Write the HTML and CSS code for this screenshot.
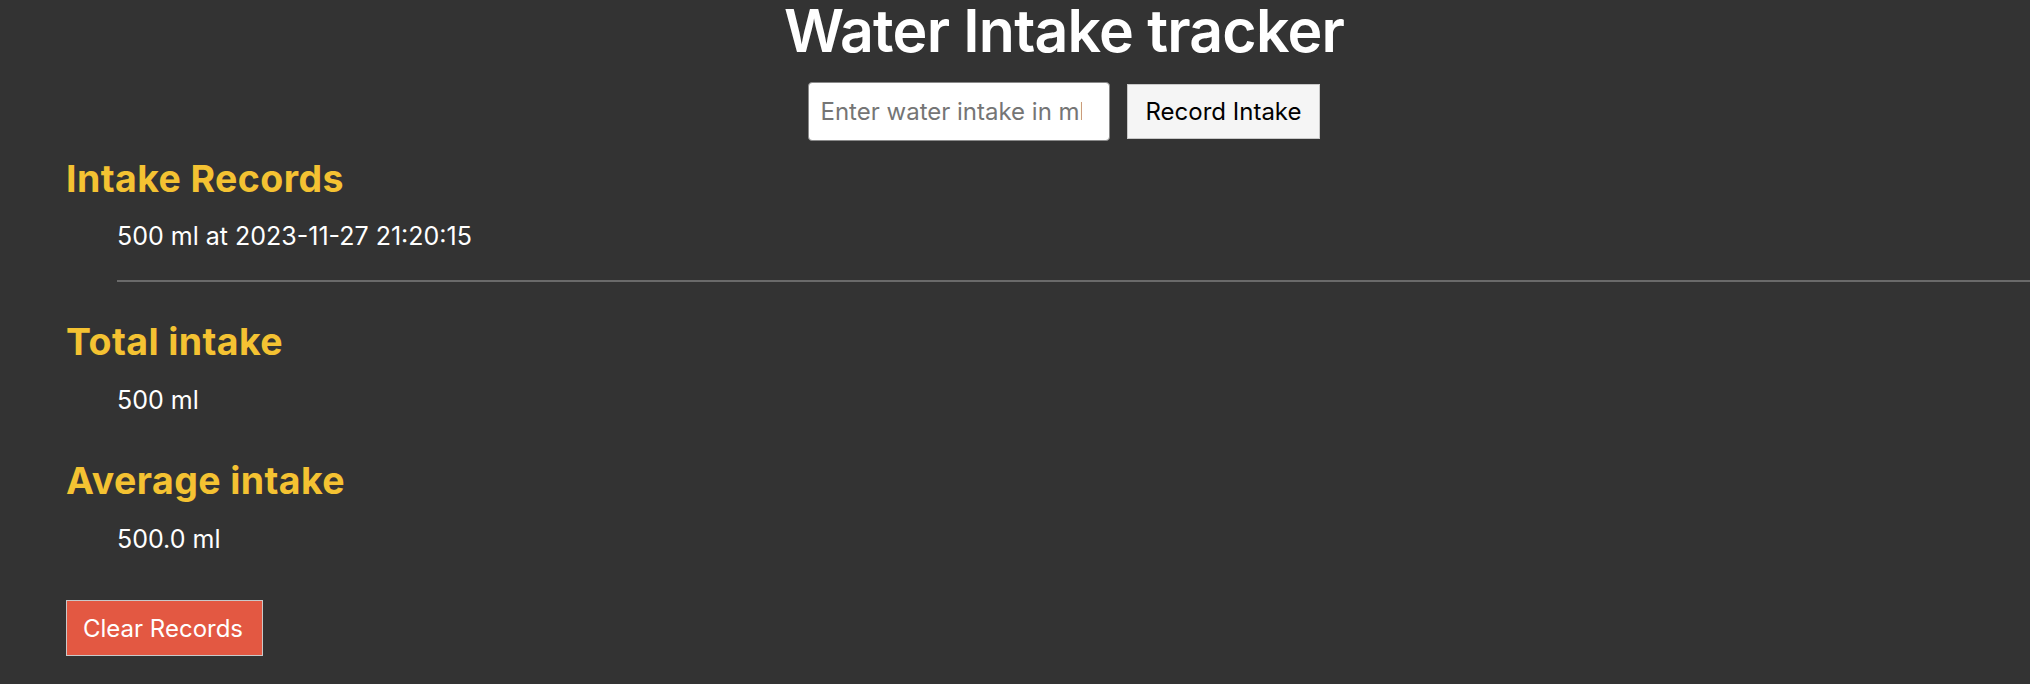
FILE: index.html
```html
<!DOCTYPE html>
<html lang="en">
<head>
<meta charset="utf-8">
<title>Water Intake tracker</title>
<link rel="stylesheet" href="styles.css">
</head>
<body>
  <header class="top">
    <h1 class="title">Water Intake tracker</h1>
    <div class="controls">
      <input class="intake-input" type="number" placeholder="Enter water intake in ml">
      <button class="record-btn">Record Intake</button>
    </div>
  </header>
  <main class="content">
    <section class="block">
      <h2 class="heading">Intake Records</h2>
      <div class="indent">
        <ul class="records">
          <li class="record">500 ml at 2023-11-27 21:20:15</li>
        </ul>
        <hr class="divider">
      </div>
    </section>
    <section class="block block-total">
      <h2 class="heading">Total intake</h2>
      <p class="value indent">500 ml</p>
    </section>
    <section class="block block-avg">
      <h2 class="heading">Average intake</h2>
      <p class="value indent">500.0 ml</p>
    </section>
    <button class="clear-btn">Clear Records</button>
  </main>
</body>
</html>
```
FILE: styles.css
```css
html, body {
  margin: 0;
  padding: 0;
  background: #333333;
  color: #ffffff;
  font-family: Inter, "Noto Sans", sans-serif;
  overflow-x: hidden;
}

.top {
  padding-left: 98px;
  text-align: center;
}

.title {
  margin: 0;
  font-size: 59px;
  line-height: 62px;
  font-weight: 600;
  letter-spacing: -0.8px;
}

.controls {
  margin-top: 20px;
  display: flex;
  justify-content: center;
  align-items: center;
  gap: 17px;
}

.intake-input {
  box-sizing: border-box;
  width: 302px;
  height: 59px;
  padding: 0 12px;
  border: 1px solid #8a8a8a;
  border-radius: 4px;
  background: #ffffff;
  font-family: Inter, sans-serif;
  font-size: 24px;
  color: #000;
  -moz-appearance: textfield;
  appearance: textfield;
}

.intake-input::placeholder {
  color: #757575;
}

.record-btn {
  box-sizing: border-box;
  height: 55px;
  padding: 0 18px;
  border: 1px solid #c8c8c8;
  border-radius: 0;
  background: #f5f5f5;
  color: #000;
  font-family: Inter, sans-serif;
  font-size: 24px;
}

.content {
  padding-left: 66px;
  padding-top: 16px;
}

.heading {
  margin: 0;
  font-size: 37.5px;
  line-height: 44px;
  font-weight: 700;
  color: #f4c232;
  letter-spacing: 0.4px;
}

.indent {
  padding-left: 51px;
}

.records {
  list-style: none;
  margin: 19px 0 0;
  padding: 0;
}

.record, .value {
  font-size: 25px;
  line-height: 32px;
}

.divider {
  margin: 28px 0 0;
  height: 2px;
  border: none;
  background: #6a6a6a;
}

.block-total {
  margin-top: 38px;
}

.block-avg {
  margin-top: 43px;
}

.value {
  margin: 20px 0 0;
}

.clear-btn {
  box-sizing: border-box;
  margin-top: 45px;
  width: 197px;
  height: 56px;
  padding: 0 16px;
  border: 1px solid #c9c9c9;
  border-radius: 0;
  background: #e35842;
  color: #ffffff;
  font-family: Inter, sans-serif;
  font-size: 24px;
  text-align: left;
}
```
